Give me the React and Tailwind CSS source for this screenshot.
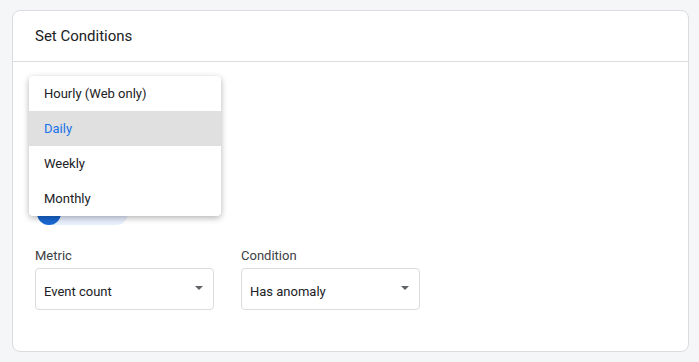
const options = ["Hourly (Web only)", "Daily", "Weekly", "Monthly"];

const Select = ({ label, value }) => (
  <div className="flex flex-col">
    <span className="text-[13px] leading-4 text-[#3c4043]">{label}</span>
    <div className="mt-[4px] flex h-[42px] w-[179px] items-center justify-between rounded-[4px] border border-[#dadce0] pl-[8px] pr-[10px]">
      <span className="pt-[6px] text-[13px] text-[#202124]">{value}</span>
      <svg width="8" height="4" viewBox="0 0 8 4" className="-mt-[2px]">
        <path d="M0 0h8L4 4z" fill="#5f6368" />
      </svg>
    </div>
  </div>
);

export default function App() {
  return (
    <div
      className="min-h-[362px] bg-[#f5f6f8] pl-[12px] pr-[10px] pt-[10px]"
      style={{ fontFamily: "Roboto, 'Liberation Sans', sans-serif" }}
    >
      <div className="relative h-[342px] rounded-[8px] border border-[#dadce0] bg-white">
        <div className="flex h-[51px] items-center border-b border-[#dadce0] pl-[22px]">
          <h2 className="text-[15px] text-[#202124]">Set Conditions</h2>
        </div>

        <div className="pl-[22px]">
          <div className="ml-[2px] mt-[139px] flex h-[24px] w-[91px] items-center rounded-full bg-[#e8f0fe]">
            <div className="h-[24px] w-[24px] rounded-full bg-[#1967d2]" />
          </div>
          <div className="mt-[23px] flex gap-[27px]">
            <Select label="Metric" value="Event count" />
            <Select label="Condition" value="Has anomaly" />
          </div>
        </div>

        <div className="absolute left-[16px] top-[65px] w-[192px] rounded-[4px] bg-white shadow-[0_2px_6px_rgba(0,0,0,0.3)]">
          {options.map((o) => (
            <div
              key={o}
              className={`flex h-[35px] items-center pl-[15px] text-[13px] ${
                o === "Daily" ? "bg-[#e0e0e0] text-[#1a73e8]" : "text-[#202124]"
              }`}
            >
              {o}
            </div>
          ))}
        </div>
      </div>
    </div>
  );
}
